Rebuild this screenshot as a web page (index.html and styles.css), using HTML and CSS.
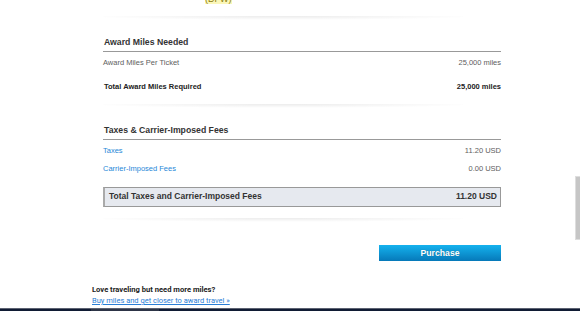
FILE: index.html
```html
<!DOCTYPE html>
<html lang="en">
<head>
  <meta charset="UTF-8">
  <meta name="viewport" content="width=device-width, initial-scale=1.0">
  <title>Award Booking Summary</title>
  <link rel="stylesheet" href="styles.css">
</head>
<body>

  <div class="summary">
    <div class="origin"><span class="airport">(DFW)</span></div>
    <div class="shade"></div>

    <div class="section">
      <h2 class="section-title">Award Miles Needed</h2>
      <div class="row">
        <span>Award Miles Per Ticket</span>
        <span>25,000 miles</span>
      </div>
      <div class="row row-strong">
        <span>Total Award Miles Required</span>
        <span>25,000 miles</span>
      </div>
    </div>
    <div class="shade shade-gap"></div>

    <div class="section">
      <h2 class="section-title">Taxes &amp; Carrier-Imposed Fees</h2>
      <div class="fee-row">
        <a href="#" class="fee-link">Taxes</a>
        <span>11.20 USD</span>
      </div>
      <div class="fee-row">
        <a href="#" class="fee-link">Carrier-Imposed Fees</a>
        <span>0.00 USD</span>
      </div>
      <div class="total-box">
        <span>Total Taxes and Carrier-Imposed Fees</span>
        <span>11.20 USD</span>
      </div>
    </div>
    <div class="shade shade-total"></div>

    <div class="actions">
      <button class="purchase">Purchase</button>
    </div>
  </div>

  <div class="promo">
    <p class="promo-title">Love traveling but need more miles?</p>
    <a href="#" class="promo-link">Buy miles and get closer to award travel &raquo;</a>
  </div>

  <div class="footer-bar"><span class="footer-tab"></span></div>

  <div class="scroll-thumb"></div>

</body>
</html>
```

FILE: styles.css
```css
body {
  font-family: "Liberation Sans", Arial, sans-serif;
  background-color: #fff;
  margin: 0;
  overflow: hidden;
  color: #333;
}

.summary {
  width: 398px;
  margin-left: 103px;
}

.origin {
  height: 16px;
}

.airport {
  display: inline-block;
  margin: -6px 0 0 102px;
  font-size: 9px;
  line-height: 10px;
  color: #8c7d12;
  background-color: #fbf7b8;
  vertical-align: top;
}

.shade {
  width: 360px;
  height: 4px;
  background: radial-gradient(ellipse 55% 100% at 50% 0, rgba(0, 0, 0, 0.08), rgba(0, 0, 0, 0));
}

.shade-gap {
  margin-top: 4px;
}

.shade-total {
  margin-top: 11px;
}

.section-title {
  margin: 0;
  padding: 16px 0 3px 1px;
  font-size: 8.7px;
  line-height: 12px;
  font-weight: bold;
  color: #333;
  border-bottom: 1px solid #999;
}

.row {
  display: flex;
  justify-content: space-between;
  padding: 5px 0 7px;
  font-size: 7.5px;
  line-height: 12px;
  color: #606060;
}

.row-strong {
  font-weight: bold;
  color: #222;
}

.row-strong span:first-child {
  padding-left: 1px;
}

.fee-row {
  display: flex;
  justify-content: space-between;
  padding: 5px 0 0.5px;
  font-size: 7.5px;
  line-height: 12px;
  color: #606060;
}

.fee-link {
  color: #1f88d8;
  text-decoration: none;
}

.total-box {
  display: flex;
  justify-content: space-between;
  margin-top: 12px;
  padding: 0 3px 0 4px;
  border: 1px solid #999;
  border-left: 2px solid #aaa;
  background-color: #e6e9ef;
  font-size: 8.5px;
  line-height: 17.5px;
  font-weight: bold;
  color: #333;
}

.actions {
  display: flex;
  justify-content: flex-end;
  margin-top: 23.5px;
}

.purchase {
  width: 122px;
  height: 16px;
  padding: 0;
  border: none;
  background: linear-gradient(to bottom, #15b2ee, #0679b9);
  color: #fff;
  font-family: "Liberation Sans", Arial, sans-serif;
  font-size: 8.7px;
  font-weight: bold;
  text-shadow: 0 0 1px rgba(0, 0, 0, 0.3);
  cursor: pointer;
}

.promo {
  margin: 23px 0 0 92px;
  font-family: Roboto, "Liberation Sans", sans-serif;
  font-size: 7.5px;
  line-height: 11px;
}

.promo-title {
  margin: 0;
  font-size: 7.6px;
  font-weight: bold;
  color: #222;
}

.promo-link {
  display: block;
  color: #2a7ed6;
  text-decoration: underline;
}

.footer-bar {
  margin-top: 1.5px;
  height: 4px;
  background-color: #101b34;
  border-top: 1px solid #5c6272;
}

.footer-tab {
  display: block;
  width: 68px;
  height: 4px;
  margin-left: 91px;
  background-color: #2d3446;
}

.scroll-thumb {
  position: absolute;
  top: 176px;
  right: 0;
  width: 4px;
  height: 62px;
  background-color: #c6c6c6;
  border: 1px solid #dedede;
  border-right: none;
}
```
